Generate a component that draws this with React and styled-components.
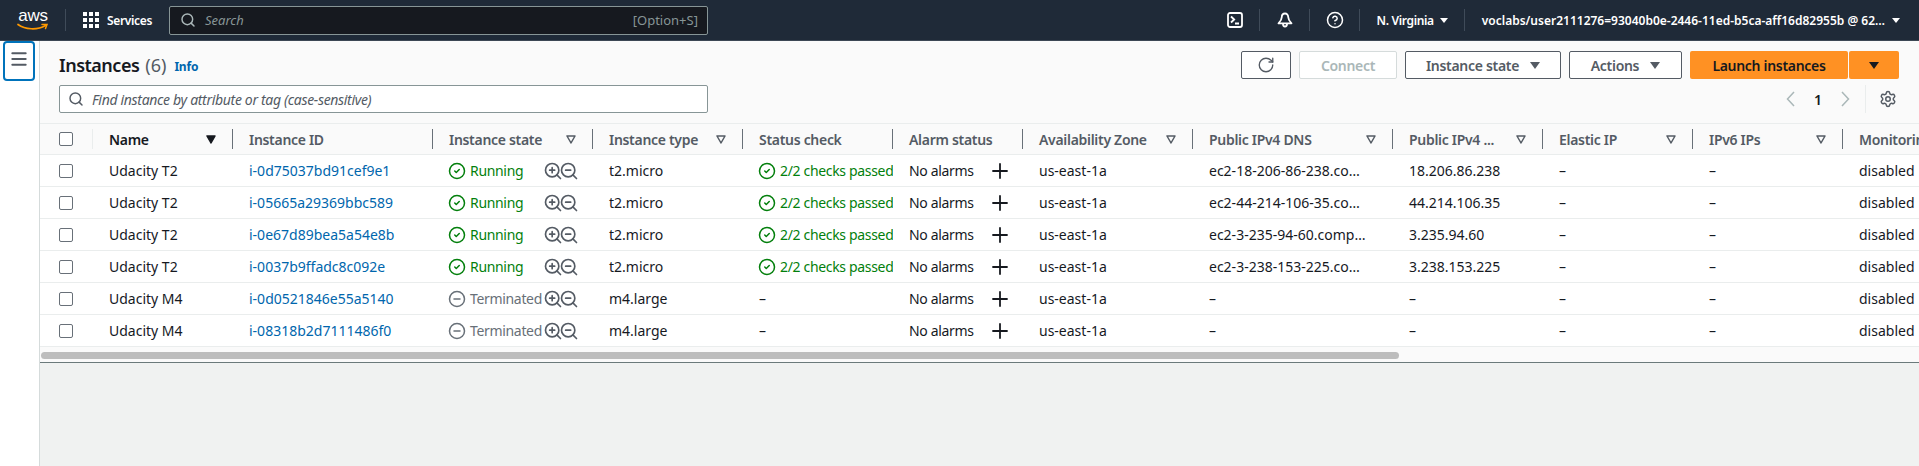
import styled, { createGlobalStyle } from "styled-components";
import {
  CircleCheck,
  CircleHelp,
  CircleMinus,
  Menu,
  Plus,
  RotateCw,
  Search,
  Settings,
  ZoomIn,
  ZoomOut,
} from "lucide-react";

const GlobalStyle = createGlobalStyle`
  html, body { margin: 0; padding: 0; height: 100%; overflow: hidden; }
  body { font-family: "Noto Sans", "Liberation Sans", sans-serif; font-size: 14px; color: #16191f; background: #f0f2f1; }
  * { box-sizing: border-box; }
`;

const Page = styled.div`
  height: 466px;
  display: flex;
  flex-direction: column;
  overflow: hidden;
`;

/* top nav */
const Nav = styled.header`
  height: 41px;
  flex: none;
  display: flex;
  align-items: center;
  background: #1f2a38;
  border-bottom: 1px solid #3c4754;
  color: #fff;
  padding-left: 17px;
`;
const Logo = styled.div`
  width: 32px;
  height: 22px;
  display: flex;
  flex-direction: column;
  align-items: center;
  margin-top: -1px;
  span {
    font-family: "Liberation Sans", sans-serif;
    font-size: 17px;
    line-height: 14px;
    letter-spacing: -0.3px;
  }
  svg { display: block; margin-top: 0; }
`;
const NavDivider = styled.div`
  width: 1px;
  height: 22px;
  background: #3f4b59;
  margin: 0 17px 0 16px;
`;
const ServicesBtn = styled.div`
  display: flex;
  align-items: center;
  gap: 8px;
  font-size: 12px;
  font-weight: 600;
  letter-spacing: -0.35px;
`;
const GridIcon = styled.div`
  display: grid;
  grid-template-columns: repeat(3, 4px);
  grid-auto-rows: 4px;
  gap: 2px;
  i { background: #fff; display: block; }
`;
const SearchBox = styled.div`
  width: 539px;
  height: 29px;
  margin-left: 17px;
  display: flex;
  align-items: center;
  background: #16191f;
  border: 1px solid #879596;
  border-radius: 2px;
  padding: 0 9px 0 10px;
  color: #aab7b8;
  font-size: 13px;
  em { margin-left: 9px; flex: 1; color: #879596; }
  span { color: #879596; }
`;
const NavRight = styled.div`
  margin-left: auto;
  display: flex;
  align-items: center;
  padding-right: 19px;
`;
const NavLabel = styled.span`
  font-size: 12px;
  font-weight: 600;
  white-space: nowrap;
  letter-spacing: ${(p) => (p.$tight ? "-0.35px" : "0")};
`;
const Caret = styled.span`
  display: inline-block;
  width: 0;
  height: 0;
  margin-left: ${(p) => p.$gap ?? 6}px;
  border-left: ${(p) => p.$size || 4}px solid transparent;
  border-right: ${(p) => p.$size || 4}px solid transparent;
  border-top: ${(p) => (p.$size || 4) * 1.4}px solid ${(p) => p.$color || "#fff"};
`;

/* main */
const Main = styled.div`
  flex: 1;
  display: flex;
  min-height: 0;
`;
const Sidebar = styled.aside`
  width: 40px;
  flex: none;
  background: #fff;
  border-right: 1px solid #d5dbdb;
  padding-left: 3px;
`;
const MenuBtn = styled.button`
  width: 32px;
  height: 40px;
  display: flex;
  align-items: center;
  justify-content: center;
  padding: 0 0 4px;
  background: #fff;
  border: 2px solid #0073bb;
  border-radius: 4px;
  color: #545b64;
`;
const Content = styled.main`
  flex: 1;
  min-width: 0;
`;
const Panel = styled.section`
  background: #fafafa;
  border-bottom: 1px solid #6b7a7b;
`;
const Toolbar = styled.div`
  height: 82px;
  padding: 10px 20px 0 19px;
  display: flex;
  flex-direction: column;
  gap: 6px;
`;
const ToolRow = styled.div`
  display: flex;
  align-items: center;
  height: ${(p) => p.$h}px;
`;
const Title = styled.h1`
  margin: 0;
  font-size: 18px;
  font-weight: 600;
  letter-spacing: -0.5px;
  color: #16191f;
  span { font-weight: 400; color: #545b64; margin-left: 6px; letter-spacing: 0; }
`;
const InfoLink = styled.a`
  margin-left: 8px;
  margin-top: 3px;
  font-size: 12px;
  font-weight: 700;
  letter-spacing: -0.2px;
  color: #0066ad;
`;
const Actions = styled.div`
  margin-left: auto;
  display: flex;
  gap: 8px;
`;
const Button = styled.button`
  height: 28px;
  width: ${(p) => p.$w}px;
  display: flex;
  align-items: center;
  justify-content: center;
  font-family: inherit;
  font-size: 14px;
  font-weight: 600;
  letter-spacing: -0.3px;
  background: #fff;
  color: #545b64;
  border: 1px solid #545b64;
  border-radius: 2px;
  padding: 0;
  white-space: nowrap;
  &:disabled {
    color: #aab7b8;
    border-color: #d5dbdb;
  }
`;
const LaunchGroup = styled.div`
  display: flex;
  gap: 1px;
`;
const LaunchBtn = styled(Button)`
  background: #ff9123;
  border: none;
  color: #16191f;
`;
const FilterBox = styled.div`
  width: 649px;
  height: 28px;
  display: flex;
  align-items: center;
  gap: 8px;
  padding: 0 8px;
  background: #fff;
  border: 1px solid #879596;
  border-radius: 2px;
  color: #545b64;
  em { font-size: 14px; letter-spacing: -0.32px; }
`;
const Pager = styled.div`
  margin-left: auto;
  display: flex;
  align-items: center;
  height: 28px;
  b { font-size: 14px; font-weight: 600; width: 46px; text-align: center; }
`;
const PagerSettings = styled.div`
  height: 28px;
  margin-left: 15px;
  padding: 0 2px 0 13px;
  border-left: 1px solid #eaeded;
  display: flex;
  align-items: center;
  color: #545b64;
`;

/* table */
const TableWrap = styled.div`
  overflow: hidden;
`;
const Table = styled.table`
  width: ${(p) => p.$w}px;
  table-layout: fixed;
  border-collapse: collapse;
  background: #fff;
`;
const Th = styled.th`
  height: 31px;
  padding: 0;
  background: #fafafa;
  border-top: 1px solid #eaeded;
  border-bottom: 1px solid #eaeded;
  font-weight: 600;
  font-size: 14px;
  letter-spacing: -0.3px;
  text-align: left;
  color: ${(p) => (p.$active ? "#16191f" : "#545b64")};
`;
const ThInner = styled.div`
  height: 20px;
  display: flex;
  align-items: center;
  justify-content: space-between;
  padding: 0 16px 0 ${(p) => p.$left ?? 16}px;
  border-right: 1px solid ${(p) => (p.$light ? "#eaeded" : "#687078")};
  white-space: nowrap;
  overflow: hidden;
`;
const SortIcon = styled.svg`
  width: 10px;
  height: 9px;
  flex: none;
  margin-left: 6px;
`;
const Td = styled.td`
  height: 32px;
  padding: 0 ${(p) => p.$right ?? 16}px 0 16px;
  border-bottom: 1px solid #eaeded;
  white-space: nowrap;
  overflow: hidden;
  text-overflow: ellipsis;
  font-size: 14px;
  color: #16191f;
`;
const Box = styled.span`
  display: block;
  width: 14px;
  height: 14px;
  background: #fff;
  border: 1px solid #687078;
  border-radius: 2px;
`;
const CheckCell = styled(Td)`
  padding: 0 0 0 19px;
`;
const IdLink = styled.a`
  color: #0066ad;
`;
const Status = styled.span`
  display: flex;
  align-items: center;
  gap: 4px;
  color: ${(p) => p.$color};
  white-space: nowrap;
  letter-spacing: -0.33px;
  svg { flex: none; margin-left: -1px; }
`;
const StateCell = styled.div`
  display: flex;
  align-items: center;
  justify-content: space-between;
`;
const ZoomIcons = styled.span`
  display: flex;
  color: #545b64;
  margin-right: -2px;
  svg { display: block; }
  svg + svg { margin-left: -4px; }
`;
const AlarmCell = styled.div`
  display: flex;
  align-items: center;
  justify-content: space-between;
  letter-spacing: -0.35px;
  svg { margin-right: -5px; }
`;
const DnsText = styled.div`
  overflow: hidden;
  text-overflow: ellipsis;
  margin-right: 6px;
`;
const ScrollTrack = styled.div`
  height: 15px;
  padding: 5px 0 3px 1px;
`;
const ScrollThumb = styled.div`
  width: 1358px;
  height: 7px;
  background: #bdbdbd;
  border-radius: 4px;
`;

const columns = [
  { key: "check", width: 53 },
  { key: "name", label: "Name", width: 140, sort: "active" },
  { key: "id", label: "Instance ID", width: 200 },
  { key: "state", label: "Instance state", width: 160, sort: "open" },
  { key: "type", label: "Instance type", width: 150, sort: "open" },
  { key: "check2", label: "Status check", width: 150 },
  { key: "alarm", label: "Alarm status", width: 130 },
  { key: "az", label: "Availability Zone", width: 170, sort: "open" },
  { key: "dns", label: "Public IPv4 DNS", width: 200, sort: "open" },
  { key: "ip", label: "Public IPv4 ...", width: 150, sort: "open" },
  { key: "eip", label: "Elastic IP", width: 150, sort: "open" },
  { key: "ipv6", label: "IPv6 IPs", width: 150, sort: "open" },
  { key: "mon", label: "Monitoring", width: 150 },
];

const rows = [
  { name: "Udacity T2", id: "i-0d75037bd91cef9e1", type: "t2.micro", dns: "ec2-18-206-86-238.compute-1.amazonaws.com", ip: "18.206.86.238", on: true },
  { name: "Udacity T2", id: "i-05665a29369bbc589", type: "t2.micro", dns: "ec2-44-214-106-35.compute-1.amazonaws.com", ip: "44.214.106.35", on: true },
  { name: "Udacity T2", id: "i-0e67d89bea5a54e8b", type: "t2.micro", dns: "ec2-3-235-94-60.compute-1.amazonaws.com", ip: "3.235.94.60", on: true },
  { name: "Udacity T2", id: "i-0037b9ffadc8c092e", type: "t2.micro", dns: "ec2-3-238-153-225.compute-1.amazonaws.com", ip: "3.238.153.225", on: true },
  { name: "Udacity M4", id: "i-0d0521846e55a5140", type: "m4.large", dns: "–", ip: "–", on: false },
  { name: "Udacity M4", id: "i-08318b2d7111486f0", type: "m4.large", dns: "–", ip: "–", on: false },
];

function Sort({ kind }) {
  const active = kind === "active";
  return (
    <SortIcon viewBox="0 0 10 9">
      <path
        d="M1 1h8L5 8z"
        fill={active ? "#16191f" : "none"}
        stroke={active ? "#16191f" : "#545b64"}
        strokeWidth="1.5"
        strokeLinejoin="round"
      />
    </SortIcon>
  );
}

function Chevron({ left }) {
  return (
    <svg width="9" height="16" viewBox="0 0 9 16" fill="none" stroke="#aab7b8" strokeWidth="1.5">
      <path d={left ? "M8 1 1.500 8 8 15" : "M1 1l6.500 7L1 15"} />
    </svg>
  );
}

function TerminalIcon() {
  return (
    <svg width="16" height="16" viewBox="0 0 16 16" fill="none" stroke="#fff" strokeWidth="1.8">
      <rect x="1" y="1" width="14" height="14" rx="2" />
      <path d="M4 4.500 7.200 7.500 4 10.500M8 11.500h4" />
    </svg>
  );
}

function BellIcon() {
  return (
    <svg width="16" height="16" viewBox="0 0 16 16" fill="none" stroke="#fff" strokeWidth="1.8" strokeLinejoin="round">
      <path d="M8 1.500c-2 0-3.200 1.600-3.200 3.600 0 2.600-1 4-3.300 6.200h13c-2.300-2.200-3.300-3.600-3.300-6.200 0-2-1.200-3.600-3.200-3.600z" />
      <path d="M6 12c0 1.500.8 2.500 2 2.500s2-1 2-2.500" />
    </svg>
  );
}

function App() {
  const tableWidth = columns.reduce((sum, c) => sum + c.width, 0);

  return (
    <Page>
      <GlobalStyle />
      <Nav>
        <Logo>
          <span>aws</span>
          <svg width="32" height="8" viewBox="0 0 32 8" fill="none">
            <path d="M1 1.500C8 6.500 20 7.500 28.500 2.500" stroke="#ff9900" strokeWidth="1.700" strokeLinecap="round" />
            <path d="M25 1.500h5l-1.500 4" stroke="#ff9900" strokeWidth="1.500" strokeLinecap="round" />
          </svg>
        </Logo>
        <NavDivider />
        <ServicesBtn>
          <GridIcon>
            {Array.from({ length: 9 }).map((_, i) => (
              <i key={i} />
            ))}
          </GridIcon>
          Services
        </ServicesBtn>
        <SearchBox>
          <Search size={16} strokeWidth={2.2} />
          <em>Search</em>
          <span>[Option+S]</span>
        </SearchBox>
        <NavRight>
          <TerminalIcon />
          <NavDivider />
          <BellIcon />
          <NavDivider />
          <CircleHelp size={18} strokeWidth={2} style={{ margin: "0 -1px" }} />
          <NavDivider />
          <NavLabel $tight>N. Virginia</NavLabel>
          <Caret />
          <NavDivider />
          <NavLabel>voclabs/user2111276=93040b0e-2446-11ed-b5ca-aff16d82955b @ 62…</NavLabel>
          <Caret $gap={7} />
        </NavRight>
      </Nav>
      <Main>
        <Sidebar>
          <MenuBtn>
            <Menu size={20} strokeWidth={2.4} />
          </MenuBtn>
        </Sidebar>
        <Content>
          <Panel>
            <Toolbar>
              <ToolRow $h={28}>
                <Title>
                  Instances<span>(6)</span>
                </Title>
                <InfoLink>Info</InfoLink>
                <Actions>
                  <Button $w={50}>
                    <RotateCw size={18} strokeWidth={1.8} />
                  </Button>
                  <Button $w={98} disabled>
                    Connect
                  </Button>
                  <Button $w={156}>
                    Instance state
                    <Caret $color="#545b64" $gap={11} $size={5.5} />
                  </Button>
                  <Button $w={113}>
                    Actions
                    <Caret $color="#545b64" $gap={11} $size={5.5} />
                  </Button>
                  <LaunchGroup>
                    <LaunchBtn $w={158}>Launch instances</LaunchBtn>
                    <LaunchBtn $w={50}>
                      <Caret $color="#16191f" $gap={0} $size={5.5} />
                    </LaunchBtn>
                  </LaunchGroup>
                </Actions>
              </ToolRow>
              <ToolRow $h={28}>
                <FilterBox>
                  <Search size={16} strokeWidth={2.2} />
                  <em>Find instance by attribute or tag (case-sensitive)</em>
                </FilterBox>
                <Pager>
                  <Chevron left />
                  <b>1</b>
                  <Chevron />
                  <PagerSettings>
                    <Settings size={18} strokeWidth={2} />
                  </PagerSettings>
                </Pager>
              </ToolRow>
            </Toolbar>
            <TableWrap>
              <Table $w={tableWidth}>
                <colgroup>
                  {columns.map((c) => (
                    <col key={c.key} width={c.width} />
                  ))}
                </colgroup>
                <thead>
                  <tr>
                    {columns.map((c) =>
                      c.key === "check" ? (
                        <Th key={c.key}>
                          <ThInner $light $left={19}>
                            <Box />
                          </ThInner>
                        </Th>
                      ) : (
                        <Th key={c.key} $active={c.sort === "active"}>
                          <ThInner>
                            {c.label}
                            {c.sort && <Sort kind={c.sort} />}
                          </ThInner>
                        </Th>
                      )
                    )}
                  </tr>
                </thead>
                <tbody>
                  {rows.map((r) => (
                    <tr key={r.id}>
                      <CheckCell>
                        <Box />
                      </CheckCell>
                      <Td>{r.name}</Td>
                      <Td>
                        <IdLink>{r.id}</IdLink>
                      </Td>
                      <Td>
                        <StateCell>
                          {r.on ? (
                            <Status $color="#037f0c">
                              <CircleCheck size={18} strokeWidth={2} />
                              Running
                            </Status>
                          ) : (
                            <Status $color="#687078">
                              <CircleMinus size={18} strokeWidth={2} />
                              Terminated
                            </Status>
                          )}
                          <ZoomIcons>
                            <ZoomIn size={20} strokeWidth={2} />
                            <ZoomOut size={20} strokeWidth={2} />
                          </ZoomIcons>
                        </StateCell>
                      </Td>
                      <Td>{r.type}</Td>
                      <Td $right={0}>
                        {r.on ? (
                          <Status $color="#037f0c">
                            <CircleCheck size={18} strokeWidth={2} />
                            2/2 checks passed
                          </Status>
                        ) : (
                          "–"
                        )}
                      </Td>
                      <Td>
                        <AlarmCell>
                          No alarms
                          <Plus size={24} strokeWidth={1.8} color="#16191f" />
                        </AlarmCell>
                      </Td>
                      <Td>us-east-1a</Td>
                      <Td>
                        <DnsText>{r.dns}</DnsText>
                      </Td>
                      <Td>{r.ip}</Td>
                      <Td>–</Td>
                      <Td>–</Td>
                      <Td>disabled</Td>
                    </tr>
                  ))}
                </tbody>
              </Table>
            </TableWrap>
            <ScrollTrack>
              <ScrollThumb />
            </ScrollTrack>
          </Panel>
        </Content>
      </Main>
    </Page>
  );
}

export default App;
